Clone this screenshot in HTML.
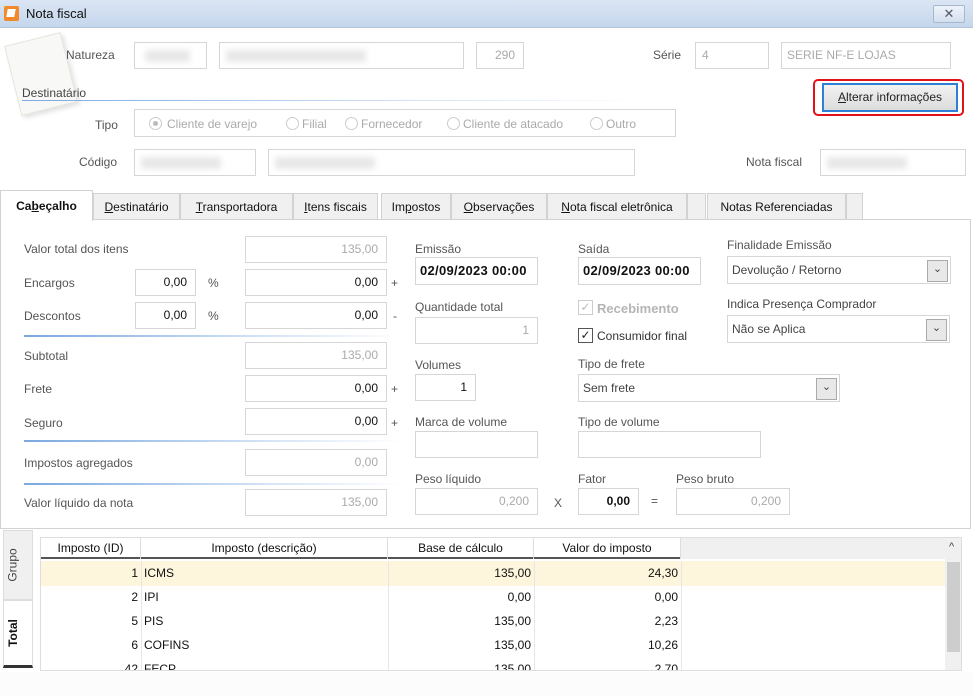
<!DOCTYPE html><html><head><meta charset="utf-8"><style>
body{margin:0;width:973px;height:696px;overflow:hidden;background:#fff;font-family:"Liberation Sans",sans-serif;font-size:12px;color:#555;position:relative}
div,span{position:absolute;box-sizing:border-box}
.l{white-space:nowrap}
.b{border:1px solid #d6d6d6;background:#fff;height:27px}
.r{text-align:right;padding-right:8px;line-height:25px}
.dis{color:#aaa}
.bold{color:#111;font-weight:bold}
.blur{background:#e8e8e8;filter:blur(3px);height:12px;top:7px}
.tab{top:193px;height:27px;border:1px solid #d2d2d2;background:#f0f0f0;color:#111;line-height:27px;text-align:center;font-size:12px}
.sep{height:2px;background:linear-gradient(90deg,#7aa8e0,#cfe0f5 60%,rgba(255,255,255,0))}
.cmb{border:1px solid #d6d6d6;background:#fff;height:28px;line-height:26px;padding-left:4px;color:#444}
.cmb i{position:absolute;right:2px;top:3px;width:19px;height:20px;border:1px solid #aaa;background:#e8e8e8;font-style:normal;text-align:center;line-height:16px;font-size:11px}
.rad{width:13px;height:13px;border:1px solid #ccc;border-radius:50%;top:7px}
.g{font-size:12px;color:#111;line-height:23px;height:24px;top:0}
.dt{border:1px solid #d6d6d6;background:#fff;height:28px;line-height:26px;padding-left:4px;overflow:hidden;white-space:nowrap;font-size:13px;font-weight:bold;color:#111;letter-spacing:.3px}
</style></head><body>
<div style="left:0;top:0;width:973px;height:28px;background:linear-gradient(#dbe6f4,#c5d6ec);border-bottom:1px solid #b5c6dc"></div>
<div style="left:4px;top:6px;width:15px;height:15px;background:#f08a2a;border-radius:2px"></div>
<div style="left:7px;top:9px;width:8px;height:8px;background:#fff;transform:skew(-10deg)"></div>
<div class="l" style="left:26px;top:6px;font-size:13px;color:#111">Nota fiscal</div>
<div style="left:933px;top:5px;width:32px;height:18px;border:1px solid #a8b8cc;background:linear-gradient(#eef3fa,#d4dfee);border-radius:2px;text-align:center;line-height:16px;color:#556;font-size:13px">✕</div>
<div style="left:12px;top:38px;width:58px;height:72px;background:#f8f8f6;border:1px solid #e6e6e0;transform:rotate(-14deg);box-shadow:2px 3px 5px rgba(0,0,0,.12)"></div>

<div class="l" style="left:66px;top:48px">Natureza</div>
<div class="b" style="left:134px;top:42px;width:73px"><div class="blur" style="left:10px;width:45px"></div></div>
<div class="b" style="left:219px;top:42px;width:245px"><div class="blur" style="left:6px;width:140px"></div></div>
<div class="b r dis" style="left:476px;top:42px;width:48px">290</div>
<div class="l" style="left:653px;top:48px">Série</div>
<div class="b dis" style="left:695px;top:42px;width:74px;padding-left:6px;line-height:25px">4</div>
<div class="b dis" style="left:781px;top:42px;width:170px;padding-left:5px;line-height:25px">SERIE NF-E LOJAS</div>
<div class="l" style="left:22px;top:86px;color:#444">Destinatário</div>
<div class="sep" style="left:22px;top:100px;width:620px;height:1px"></div>
<div style="left:813px;top:79px;width:151px;height:37px;border:2px solid #e0121a;border-radius:5px"></div>
<div style="left:822px;top:83px;width:136px;height:29px;border:2px solid #2f7fd6;background:linear-gradient(#f2f2f2,#dcdcdc);color:#222;text-align:center;line-height:25px"><u>A</u>lterar informações</div>

<div class="l" style="left:95px;top:118px">Tipo</div>
<div class="b" style="left:134px;top:109px;width:542px;height:28px">
<div class="rad" style="left:14px"></div><div style="left:18px;top:11px;width:5px;height:5px;border-radius:50%;background:#bbb"></div>
<div class="l dis" style="left:32px;top:7px">Cliente de varejo</div>
<div class="rad" style="left:151px"></div><div class="l dis" style="left:167px;top:7px">Filial</div>
<div class="rad" style="left:210px"></div><div class="l dis" style="left:226px;top:7px">Fornecedor</div>
<div class="rad" style="left:312px"></div><div class="l dis" style="left:328px;top:7px">Cliente de atacado</div>
<div class="rad" style="left:455px"></div><div class="l dis" style="left:471px;top:7px">Outro</div>
</div>
<div class="l" style="left:79px;top:155px">Código</div>
<div class="b" style="left:134px;top:149px;width:122px"><div class="blur" style="left:6px;width:80px"></div></div>
<div class="b" style="left:268px;top:149px;width:367px"><div class="blur" style="left:6px;width:100px"></div></div>
<div class="l" style="left:746px;top:155px">Nota fiscal</div>
<div class="b" style="left:820px;top:149px;width:146px"><div class="blur" style="left:6px;width:80px"></div></div>

<div style="left:0;top:219px;width:971px;height:310px;border:1px solid #d2d2d2;background:#fff"></div>
<div class="tab" style="left:0;top:190px;width:93px;height:31px;background:#fff;border-bottom:none;font-weight:bold;line-height:30px">Ca<u>b</u>eçalho</div>
<div class="tab" style="left:93px;width:87px"><u>D</u>estinatário</div>
<div class="tab" style="left:180px;width:113px"><u>T</u>ransportadora</div>
<div class="tab" style="left:293px;width:85px"><u>I</u>tens fiscais</div>
<div class="tab" style="left:381px;width:70px">Im<u>p</u>ostos</div>
<div class="tab" style="left:451px;width:96px"><u>O</u>bservações</div>
<div class="tab" style="left:547px;width:140px"><u>N</u>ota fiscal eletrônica</div>
<div class="tab" style="left:687px;width:19px"></div>
<div class="tab" style="left:707px;width:139px">Notas Referenciadas</div>
<div class="tab" style="left:846px;width:17px"></div>

<div class="l" style="left:24px;top:242px">Valor total dos itens</div>
<div class="b r dis" style="left:245px;top:236px;width:142px">135,00</div>
<div class="l" style="left:24px;top:276px">Encargos</div>
<div class="b r" style="left:135px;top:269px;width:61px;color:#111">0,00</div>
<div class="l" style="left:208px;top:276px">%</div>
<div class="b r" style="left:245px;top:269px;width:142px;color:#111">0,00</div>
<div class="l" style="left:391px;top:276px">+</div>
<div class="l" style="left:24px;top:309px">Descontos</div>
<div class="b r" style="left:135px;top:302px;width:61px;color:#111">0,00</div>
<div class="l" style="left:208px;top:309px">%</div>
<div class="b r" style="left:245px;top:302px;width:142px;color:#111">0,00</div>
<div class="l" style="left:393px;top:309px">-</div>
<div class="sep" style="left:24px;top:335px;width:380px"></div>
<div class="l" style="left:24px;top:349px">Subtotal</div>
<div class="b r dis" style="left:245px;top:342px;width:142px">135,00</div>
<div class="l" style="left:24px;top:382px">Frete</div>
<div class="b r" style="left:245px;top:375px;width:142px;color:#111">0,00</div>
<div class="l" style="left:391px;top:382px">+</div>
<div class="l" style="left:24px;top:416px">Seguro</div>
<div class="b r" style="left:245px;top:408px;width:142px;color:#111">0,00</div>
<div class="l" style="left:391px;top:416px">+</div>
<div class="sep" style="left:24px;top:440px;width:380px"></div>
<div class="l" style="left:24px;top:456px">Impostos agregados</div>
<div class="b r dis" style="left:245px;top:449px;width:142px">0,00</div>
<div class="sep" style="left:24px;top:483px;width:380px"></div>
<div class="l" style="left:24px;top:496px">Valor líquido da nota</div>
<div class="b r dis" style="left:245px;top:489px;width:142px">135,00</div>

<div class="l" style="left:415px;top:242px">Emissão</div>
<div class="dt" style="left:415px;top:257px;width:123px">02/09/2023 00:00</div>
<div class="l" style="left:415px;top:300px">Quantidade total</div>
<div class="b r dis" style="left:415px;top:317px;width:123px">1</div>
<div class="l" style="left:415px;top:358px">Volumes</div>
<div class="b r" style="left:415px;top:374px;width:61px;color:#111">1</div>
<div class="l" style="left:415px;top:415px">Marca de volume</div>
<div class="b" style="left:415px;top:431px;width:123px"></div>
<div class="l" style="left:415px;top:472px">Peso líquido</div>
<div class="b r dis" style="left:415px;top:488px;width:123px">0,200</div>
<div class="l" style="left:554px;top:496px">X</div>
<div class="l" style="left:578px;top:472px">Fator</div>
<div class="b r bold" style="left:578px;top:488px;width:61px">0,00</div>
<div class="l" style="left:651px;top:494px">=</div>
<div class="l" style="left:676px;top:472px">Peso bruto</div>
<div class="b r dis" style="left:676px;top:488px;width:114px">0,200</div>

<div class="l" style="left:578px;top:242px">Saída</div>
<div class="dt" style="left:578px;top:257px;width:123px">02/09/2023 00:00</div>
<div style="left:578px;top:300px;width:15px;height:15px;border:1px solid #ccc;color:#bbb;font-size:12px;line-height:13px;text-align:center">✓</div>
<div class="l dis" style="left:597px;top:301px;font-size:13px;font-weight:bold;color:#b5b5b5">Recebimento</div>
<div style="left:578px;top:328px;width:15px;height:15px;border:1px solid #555;color:#222;font-size:12px;line-height:13px;text-align:center">✓</div>
<div class="l" style="left:597px;top:329px;color:#333">Consumidor final</div>
<div class="l" style="left:578px;top:357px">Tipo de frete</div>
<div class="cmb" style="left:578px;top:374px;width:262px">Sem frete<i>⌄</i></div>
<div class="l" style="left:578px;top:415px">Tipo de volume</div>
<div class="b" style="left:578px;top:431px;width:183px"></div>
<div class="l" style="left:727px;top:238px">Finalidade Emissão</div>
<div class="cmb" style="left:727px;top:256px;width:224px">Devolução / Retorno<i>⌄</i></div>
<div class="l" style="left:727px;top:297px;color:#444">Indica Presença Comprador</div>
<div class="cmb" style="left:727px;top:315px;width:223px">Não se Aplica<i>⌄</i></div>

<div style="left:3px;top:530px;width:30px;height:70px;background:#f0f0f0;border:1px solid #ddd"></div>
<div class="l" style="left:-4px;top:558px;transform:rotate(-90deg);color:#444">Grupo</div>
<div style="left:3px;top:600px;width:30px;height:68px;background:#fff;border:1px solid #ddd;border-bottom:3px solid #333"></div>
<div class="l" style="left:-1px;top:626px;transform:rotate(-90deg);font-weight:bold;color:#111">Total</div>
<div style="left:40px;top:537px;width:922px;height:134px;border:1px solid #ddd;overflow:hidden;background:#fff">
 <div style="left:0;top:0;width:640px;height:21px;border-bottom:2px solid #555;background:#fff"></div>
 <div style="left:640px;top:0;width:264px;height:21px;background:#f0f0f0"></div>
 <div class="g" style="left:0;top:0;width:100px;height:21px;line-height:21px;text-align:center;border-right:1px solid #ddd">Imposto (ID)</div>
 <div class="g" style="left:100px;top:0;width:247px;height:21px;line-height:21px;text-align:center;border-right:1px solid #ddd">Imposto (descrição)</div>
 <div class="g" style="left:347px;top:0;width:146px;height:21px;line-height:21px;text-align:center;border-right:1px solid #ddd">Base de cálculo</div>
 <div class="g" style="left:493px;top:0;width:147px;height:21px;line-height:21px;text-align:center;border-right:1px solid #ddd">Valor do imposto</div>
 <div style="left:0;top:23px;width:904px;height:25px;background:#fdf6dc"></div>
 <div style="left:100px;top:23px;width:1px;height:120px;background:#e6e6e6"></div>
 <div style="left:347px;top:23px;width:1px;height:120px;background:#e6e6e6"></div>
 <div style="left:493px;top:23px;width:1px;height:120px;background:#e6e6e6"></div>
 <div style="left:640px;top:23px;width:1px;height:120px;background:#e6e6e6"></div>
 <div style="left:904px;top:0;width:17px;height:134px;background:#f0f0f0"></div>
 <div style="left:906px;top:24px;width:13px;height:90px;background:#cdcdcd"></div>
 <div class="l" style="left:908px;top:3px;color:#444;font-size:11px">^</div>
 <div style="left:0;top:24px;width:904px;height:120px">
 <div class="g" style="left:0;top:0;width:97px;text-align:right">1</div><div class="g" style="left:103px;top:0">ICMS</div><div class="g" style="left:347px;top:0;width:143px;text-align:right">135,00</div><div class="g" style="left:493px;top:0;width:144px;text-align:right">24,30</div>
 <div class="g" style="left:0;top:24px;width:97px;text-align:right">2</div><div class="g" style="left:103px;top:24px">IPI</div><div class="g" style="left:347px;top:24px;width:143px;text-align:right">0,00</div><div class="g" style="left:493px;top:24px;width:144px;text-align:right">0,00</div>
 <div class="g" style="left:0;top:48px;width:97px;text-align:right">5</div><div class="g" style="left:103px;top:48px">PIS</div><div class="g" style="left:347px;top:48px;width:143px;text-align:right">135,00</div><div class="g" style="left:493px;top:48px;width:144px;text-align:right">2,23</div>
 <div class="g" style="left:0;top:72px;width:97px;text-align:right">6</div><div class="g" style="left:103px;top:72px">COFINS</div><div class="g" style="left:347px;top:72px;width:143px;text-align:right">135,00</div><div class="g" style="left:493px;top:72px;width:144px;text-align:right">10,26</div>
 <div class="g" style="left:0;top:96px;width:97px;text-align:right">42</div><div class="g" style="left:103px;top:96px">FECP</div><div class="g" style="left:347px;top:96px;width:143px;text-align:right">135,00</div><div class="g" style="left:493px;top:96px;width:144px;text-align:right">2,70</div>
 </div>
</div>
<div style="left:0;top:672px;width:973px;height:24px;background:#fcfcfc"></div>
</body></html>
